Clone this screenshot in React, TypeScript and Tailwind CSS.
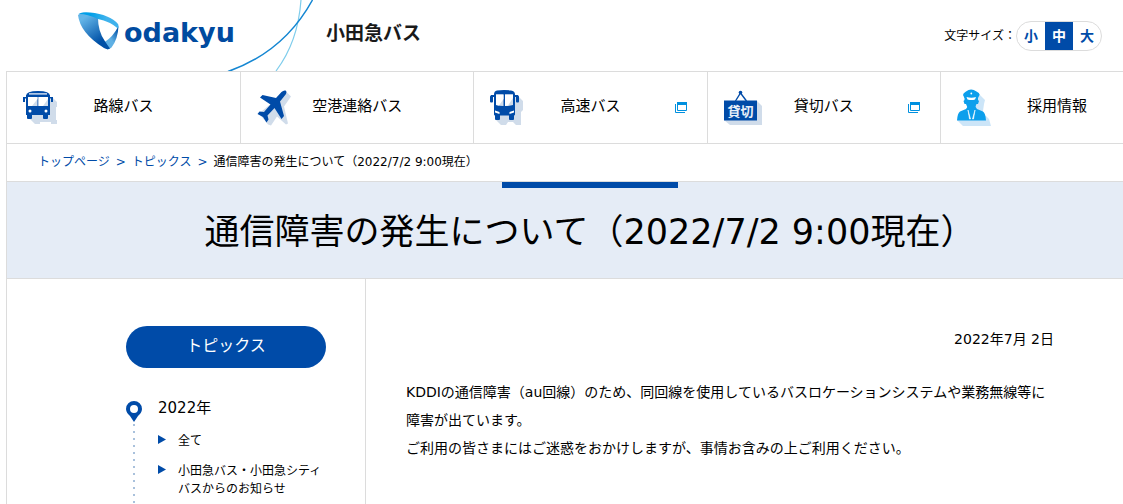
import React from 'react';

function RouteBusIcon() {
  return (
    <svg width="36" height="36" viewBox="0 0 36 36" aria-hidden="true">
      <path d="M29 7l5 5v5h-1v13h1v4h-6v-2h-11v2h-5l-6-6z" fill="#d0dcea" />
      <g fill="#004ba8">
        <path d="M3 6Q3 1 15 1T27 6v2H3z" />
        <path d="M3 5h24v19H3z" />
        <path d="M3 17h24v8H3z" />
        <rect x="4" y="24" width="5" height="5" rx="1" />
        <rect x="20" y="24" width="5" height="5" rx="1" />
        <rect x="0" y="7" width="2" height="5" />
        <rect x="28" y="7" width="2" height="5" />
        <path d="M0 7h4v1.500H0zM26 7h4v1.500h-4z" />
      </g>
      <path d="M6 3.300h18v1.200H6z" fill="#fff" />
      <path d="M5 7h9.500v9H5zM15.500 7H25v9h-9.500z" fill="#d0dcea" />
      <path d="M5 7h9.500v2L9 16H5zM15.500 7H25v2l-5 7h-4.500z" fill="#fff" />
      <circle cx="7" cy="21" r="1.500" fill="#fff" />
      <circle cx="23" cy="21" r="1.500" fill="#fff" />
    </svg>
  );
}

function PlaneIcon() {
  return (
    <svg width="36" height="36" viewBox="0 0 36 36" aria-hidden="true">
      <path d="M29 1.500l5 5-7 10 4 17-2 1-9-8-6 9-3-1-9-11z" fill="#d0dcea" />
      <path
        d="M28.500.500q1.500.500.500 3.500l-6 7.500 4 14.500-2.500 3-7-11-7 7.500 1 4-2 3-3.500-5.500-5.500-3 2-2.500 4.500.500 6.500-7.500L3 7.500 5.500 5l13.500 3 5.500-6q2-2 4-1.500z"
        fill="#004ba8"
      />
    </svg>
  );
}

function ExpressBusIcon() {
  return (
    <svg width="36" height="36" viewBox="0 0 36 36" aria-hidden="true">
      <path d="M27 5l6 6v9l-2 2v13h-5l-3-3h-5l-2 3h-5l-5-5z" fill="#d0dcea" />
      <g fill="#004ba8">
        <path d="M7 .500Q14-.500 21 .500q4 .500 4 4v20q0 1-1 1H5q-1 0-1-1V4.500q0-3.500 3-4z" />
        <rect x="5" y="23" width="5" height="7" rx="1" />
        <rect x="19" y="23" width="5" height="7" rx="1" />
        <rect x="0" y="5.500" width="3" height="7" rx="1" />
        <rect x="26" y="5.500" width="3" height="7" rx="1" />
        <path d="M1 5h27v2H1z" />
      </g>
      <path d="M6 4.500h7.500V16q-4.500 0-7.500-1zM15 4.500h8V15q-3 1-8 1z" fill="#d0dcea" />
      <path d="M6 4.500h7.500V9L9 15.500 6 15zM15 4.500h8V8l-5 7.500-3 .500z" fill="#fff" />
      <path d="M5 20.500l4.500 1.500v2L5 22.500zM24 20.500L19.500 22v2l4.500-1.500z" fill="#fff" />
    </svg>
  );
}

function CharterIcon() {
  return (
    <svg width="38" height="36" viewBox="0 0 38 36" aria-hidden="true">
      <path d="M33 11l5 5v19H6l-6-5z" fill="#d0dcea" />
      <path d="M11.500 11l5-8 6 8" fill="none" stroke="#004ba8" strokeWidth="1.400" />
      <circle cx="16.500" cy="2.500" r="1.800" fill="#004ba8" />
      <path d="M0 10.500h33v20H0z" fill="#004ba8" />
      <text
        x="16.500"
        y="25.500"
        textAnchor="middle"
        fontSize="13"
        fontWeight="700"
        fill="#e8eff8"
        fontFamily="Noto Sans CJK JP, sans-serif"
      >
        貸切
      </text>
    </svg>
  );
}

function StaffIcon() {
  return (
    <svg width="36" height="38" viewBox="0 0 36 38" aria-hidden="true">
      <path d="M22 5l6 6-1 4-1 7-3 3 6 2 3 3 2 7H6l-6-6z" fill="#cce5f8" />
      <g fill="#0c9fec">
        <path d="M6 6q0-2 3-3.500Q14-1.500 19.500 2.500 23 4 22.500 6L21 9H7.500z" />
        <path d="M7.500 8H21v3l1 1-1 3h-1.500q-1 4-3.500 5.500h-3.500Q10 19 9 15H7.500l-1-3 1-1z" />
        <path d="M11 17l-2 3-6 2.500Q.500 24 0 31.500h29q-.500-7.500-3-9L20 20l-2-3z" />
      </g>
      <path d="M9.500 8q5 1.500 9.500 0l-1 2.500q-3.500 1-7.500 0z" fill="#fff" />
      <path d="M11 21l2.500 9h-1zM18 21l-2.500 9h1z" fill="#fff" stroke="#fff" strokeWidth="0.600" />
      <circle cx="14.300" cy="4.500" r="0.900" fill="#fff" />
    </svg>
  );
}

function NewWindowIcon() {
  return (
    <svg width="12" height="11" viewBox="0 0 12 11" role="img" aria-label="別ウィンドウで開く">
      <path d="M2.500.500h9v8h-9zM.500 2v8.500H10" fill="none" stroke="#0090df" />
      <path d="M2 0h10v3H2z" fill="#0090df" />
    </svg>
  );
}

function LogoMark() {
  return (
    <svg width="42" height="40" viewBox="0 0 42 40" aria-hidden="true">
      <defs>
        <linearGradient id="left" x1="0.100" y1="0" x2="0.700" y2="1">
          <stop offset="0.150" stopColor="#63b5e8" />
          <stop offset="0.850" stopColor="#0050a6" />
        </linearGradient>
        <linearGradient id="top" x1="0" y1="0" x2="1" y2="0">
          <stop offset="0.300" stopColor="#009fe8" />
          <stop offset="0.700" stopColor="#3fb2ec" />
        </linearGradient>
        <linearGradient id="right" x1="1" y1="0" x2="0.200" y2="1">
          <stop offset="0.100" stopColor="#0050a6" />
          <stop offset="0.600" stopColor="#5fb0e4" />
        </linearGradient>
      </defs>
      <path d="M40.500 14Q40 27 33.500 35.500q-2 2-4.500 2l-3-7Q35 25 40.500 14z" fill="url(#right)" />
      <path d="M0 3Q2 .500 6 .500L20 6q0 13 6.500 22.500Q30 34 32 36.500q-3 1.500-6-.500Q2 21 0 3z" fill="url(#left)" />
      <path d="M.500 2Q4-.500 12 .500 32 2.500 40 12q1 2 0 4.500Q32 9.500 20 7 8 1.500.500 2z" fill="url(#top)" />
    </svg>
  );
}

function HeaderCurves() {
  return (
    <svg
      className="pointer-events-none absolute bottom-0 left-[226px]"
      width="90"
      height="71"
      viewBox="226 0 90 71"
      aria-hidden="true"
    >
      <path d="M276 71Q298 42 301 0" fill="none" stroke="#7fcdec" strokeWidth="1.200" />
      <path d="M228 71.500Q284 52 312.500 0" fill="none" stroke="#1486d2" strokeWidth="1.500" />
    </svg>
  );
}

const navItems = [
  { label: '路線バス', icon: <RouteBusIcon />, external: false },
  { label: '空港連絡バス', icon: <PlaneIcon />, external: false },
  { label: '高速バス', icon: <ExpressBusIcon />, external: true },
  { label: '貸切バス', icon: <CharterIcon />, external: true },
  { label: '採用情報', icon: <StaffIcon />, external: false },
];

function Header() {
  return (
    <header className="relative flex h-[71px] items-start justify-between pr-[21px] pl-[78px]">
      <HeaderCurves />
      <a href="#" className="flex items-start pt-3">
        <LogoMark />
        <span className="ml-1 text-[27px] leading-[42px] font-bold text-[#004ba0]">odakyu</span>
        <span className="ml-[91px] text-[19px] leading-[42px] font-bold text-[#1a1a1a]">小田急バス</span>
      </a>
      <div className="flex items-center pt-[21px] text-xs" role="group" aria-label="文字サイズ">
        <span>文字サイズ：</span>
        <div className="flex h-[30px] overflow-hidden rounded-full border border-[#dcdcdc] text-sm font-bold text-[#004ba8]">
          <button type="button" className="w-7">小</button>
          <button type="button" aria-pressed="true" className="w-7 bg-[#004ba8] text-white">中</button>
          <button type="button" className="w-7">大</button>
        </div>
      </div>
    </header>
  );
}

export default function App() {
  return (
    <div className="overflow-hidden bg-white font-['DejaVu_Sans','Noto_Sans_CJK_JP',sans-serif] text-black" lang="ja">
      <Header />
      <div className="ml-[6px] min-w-[1167px] border-t border-l border-[#dcdcdc]">
        <nav className="grid grid-cols-5 border-b border-[#dcdcdc]" aria-label="メイン">
          {navItems.map((item) => (
            <a
              key={item.label}
              href="#"
              className="grid h-[71px] grid-cols-[40px_1fr_40px] items-center border-l border-[#dcdcdc] px-4 text-[15px] first:border-l-0"
            >
              {item.icon}
              <span className="pb-[2px] text-center">{item.label}</span>
              {item.external && (
                <span className="mr-1 justify-self-end">
                  <NewWindowIcon />
                </span>
              )}
            </a>
          ))}
        </nav>

        <nav aria-label="パンくず" className="border-b border-[#dcdcdc] pl-[31px] text-xs">
          <ol className="flex h-[37px] items-center gap-[6px] pb-[2px] text-[#004ba8]">
            <li><a href="#">トップページ</a></li>
            <li aria-hidden="true">&gt;</li>
            <li><a href="#">トピックス</a></li>
            <li aria-hidden="true">&gt;</li>
            <li className="text-black">通信障害の発生について（2022/7/2 9:00現在）</li>
          </ol>
        </nav>

        <div className="flex flex-col items-center border-b border-[#dcdcdc] bg-[#e5ecf6]">
          <div className="h-[6px] w-44 bg-[#004ba8]" />
          <h1 className="pt-[18px] pb-5 text-[35px] leading-[52px]">通信障害の発生について（2022/7/2 9:00現在）</h1>
        </div>

        <div className="flex">
          <aside className="w-[359px] shrink-0 border-r border-[#dcdcdc] pt-[47px] pr-[39px] pl-[119px]">
            <a
              href="#"
              className="block rounded-full bg-[#004ba8] pt-2 pb-[10px] text-center text-base text-white"
            >
              トピックス
            </a>
            <div className="mt-7 flex gap-4">
              <div className="flex flex-col items-center pt-[5px]">
                <svg width="16" height="21" viewBox="0 0 16 21" aria-hidden="true">
                  <path
                    d="M8 0a8 8 0 0 1 8 8c0 3-2 5-4 7l-4 6-4-6C2 13 0 11 0 8a8 8 0 0 1 8-8zm0 4a4 4 0 1 0 0 8 4 4 0 0 0 0-8z"
                    fill="#004ba8"
                  />
                </svg>
                <div className="mt-[2px] w-[2px] flex-1 bg-[repeating-linear-gradient(to_bottom,#a9c1dc_0_2px,transparent_2px_7px)]" />
              </div>
              <div className="pt-px pb-4">
                <h2 className="text-[15px] leading-[22px]">2022年</h2>
                <ul className="mt-[13px] flex flex-col gap-3 text-xs leading-[18px]">
                  {['全て', '小田急バス・小田急シティバスからのお知らせ'].map((topic) => (
                    <li key={topic} className="flex gap-3">
                      <svg className="mt-[3px] shrink-0" width="8" height="9" viewBox="0 0 8 9" aria-hidden="true">
                        <path d="M0 0l8 4.500L0 9z" fill="#004ba8" />
                      </svg>
                      <a href="#" className="w-36">{topic}</a>
                    </li>
                  ))}
                </ul>
              </div>
            </div>
          </aside>
          <main className="flex-1 pt-[46px] pr-[119px] pl-10 text-sm leading-7">
            <p className="text-right">2022年7月 2日</p>
            <p className="mt-[25px]">
              KDDIの通信障害（au回線）のため、同回線を使用しているバスロケーションシステムや業務無線等に障害が出ています。
              <br />
              ご利用の皆さまにはご迷惑をおかけしますが、事情お含みの上ご利用ください。
            </p>
          </main>
        </div>
      </div>
    </div>
  );
}
